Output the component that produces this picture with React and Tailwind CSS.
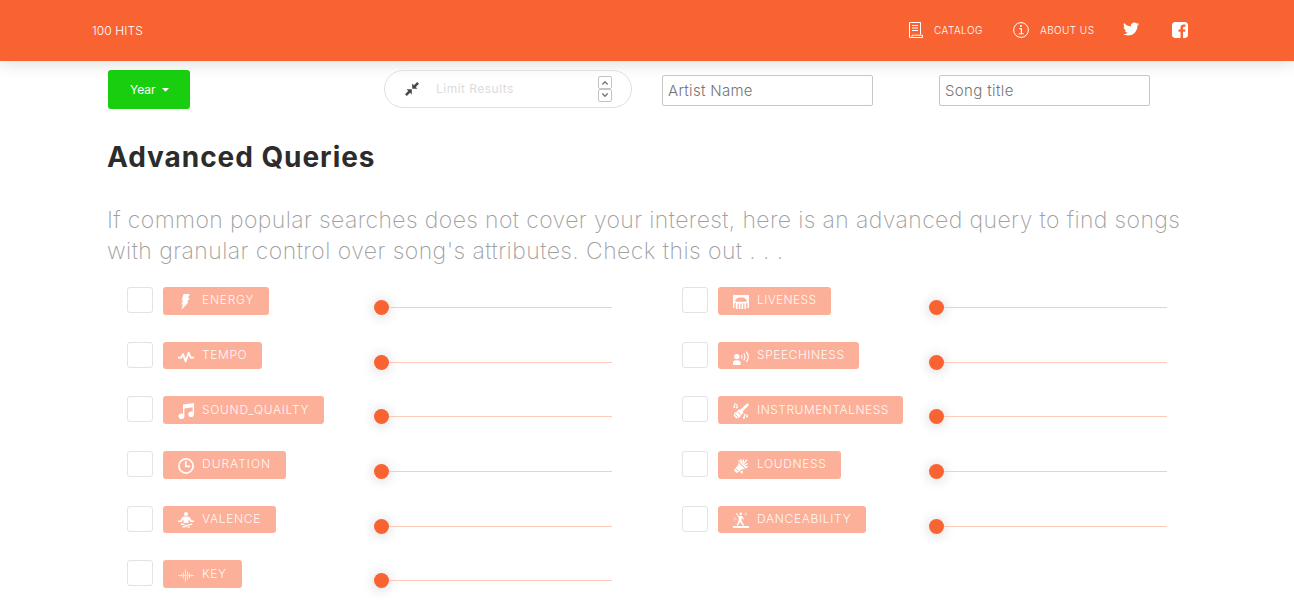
import React from 'react';

const icons = {
  energy: <path d="M5.6 0H12L9.8 4H11.8L9 8.2H10.6L3.2 16L5 10.4H3.2L5.2 6.6H3.6Z" />,
  tempo: (
    <path d="M0 8.7H3.2L5 5L7.6 12.4L10.7 3.8L12.7 8.7H16" fill="none" stroke="currentColor" strokeWidth="1.8" strokeLinejoin="round" />
  ),
  sound: (
    <>
      <path d="M5 1.4L16 0V11.5H14.6V4.3L6.4 5.4V13.5H5Z" />
      <circle cx="3.4" cy="13.2" r="2.8" />
      <circle cx="13.1" cy="11.2" r="2.8" />
    </>
  ),
  duration: (
    <g fill="none" stroke="currentColor" strokeWidth="1.7">
      <circle cx="8" cy="8" r="7.1" />
      <path d="M7.8 3V8.3H12" />
    </g>
  ),
  valence: (
    <>
      <circle cx="8" cy="2" r="2" />
      <path d="M6 4.4H10L12 5.4L13.6 8.4H16V10H12.7L10.7 7.6L10.3 11H5.7L5.3 7.6L3.3 10H0V8.4H2.4L4 5.4Z" />
      <path d="M2 11.4L5 11.6L7.6 12.4L4.2 13.3ZM14 11.2L14.4 12.4L6 15.6L4 15.2L4.2 14.4ZM9.5 14.9L12.2 14.4L11.2 16L9.6 15.9Z" />
    </>
  ),
  key: (
    <path d="M0 8.5H2M14 8.5H16M3.5 7V10M5.5 5.5V11.5M7.5 2.5V14.5M9.5 4.5V12.5M11.5 6V11M13.2 7.6V9.4M2 8.5H14" fill="none" stroke="currentColor" strokeWidth="1.1" opacity=".65" />
  ),
  liveness: (
    <path d="M0 1H16V14H14.6V9.5L13.2 8.6V15H11.4V9.4H10.2V15H8.6V9.4H7.4V15H5.8V9.4H4.6V15H2.8V8.6L1.4 9.5V14H0ZM2 6.6L2.8 7.8H13.2L14 6.6L12.2 4.4L10.5 3.4H5.5L3.8 4.4Z" fillRule="evenodd" />
  ),
  speech: (
    <>
      <circle cx="3.8" cy="7.6" r="2.7" />
      <path d="M0 16V13.6Q0 11.4 2.3 11.2H5.2Q7.6 11.4 7.6 13.6V16Z" />
      <g fill="none" stroke="currentColor" strokeWidth="1.1">
        <path d="M8.4 6Q9.5 7.7 8.4 9.6M10.8 4.3Q13 7.8 10.8 11.3M13.2 2.6Q17.4 7.8 13.2 13" />
      </g>
    </>
  ),
  instrument: (
    <>
      <path d="M14.4 .2L15.9 1.6L15 3L9.7 8.4L10.6 10L8.6 11.6L6.5 14.6L3.5 15.6L.6 12.8L1.3 9.7L3.8 8.8L5.3 6.4L7.2 6.8L12.9 1.6Z" />
      <path d="M1.6 4V.7L4.2 1.8V4.4M11.4 14.5V11.4L14.4 12.4V13.6" fill="none" stroke="currentColor" strokeWidth=".9" />
      <circle cx="1.2" cy="3.9" r="1" /><circle cx="3.7" cy="4.6" r="1" />
      <circle cx="11" cy="14.7" r="1.1" /><circle cx="14" cy="13.6" r="1" />
      <path d="M1.8 10.8L5.4 14.4M4.6 9L7.4 11.8" stroke="#fcb099" strokeWidth="1" />
    </>
  ),
  loudness: (
    <>
      <path d="M5.4 4.4L12 11L9 11.2L5.4 14L3.4 15L1 12.6L2.2 10.4L5 7.2Z" />
      <path d="M5.6 2.4L13.6 10.2" fill="none" stroke="currentColor" strokeWidth="1.3" />
      <path d="M7.6 1L9 4.2M10.6 1.4L9.8 5.4M14 1.6L10.4 6M14.6 5.4L11.2 7.4M14.8 8.8L12.4 8.6" fill="none" stroke="currentColor" strokeWidth="1.2" />
      <path d="M7.2 13.6L9.6 12.4L9.8 15.6L8.2 15.4Z" />
      <path d="M2.6 10.4L5.6 13.4" stroke="#fcb099" strokeWidth=".9" />
    </>
  ),
  dance: (
    <>
      <path d="M0 14H16V16H0Z" />
      <circle cx="7.8" cy="1.9" r="1.4" />
      <path d="M3.4 .8L5.7 4H9L11 6.8L10.3 7.6L8.8 6L8.5 8.5L11.3 13.5H9.8L7.2 10L5 13.5H3.6L5.7 8.6V5.7L2.8 1.4Z" />
      <path d="M11.8 3.6V1.2H13.6V3.6M1.2 8.8V6.4L3 5.9V8" fill="none" stroke="currentColor" strokeWidth=".8" opacity=".55" />
    </>
  ),
};

const leftColumn = [
  { label: 'ENERGY', icon: 'energy', width: 'w-[106px]', tracking: 'tracking-[0.77px]' },
  { label: 'TEMPO', icon: 'tempo', width: 'w-[99px]', tracking: 'tracking-[0.6px]' },
  { label: 'SOUND_QUAILTY', icon: 'sound', width: 'w-[161px]', tracking: 'tracking-[0.7px]' },
  { label: 'DURATION', icon: 'duration', width: 'w-[123px]', tracking: 'tracking-[1px]' },
  { label: 'VALENCE', icon: 'valence', width: 'w-[113px]', tracking: 'tracking-[0.7px]' },
  { label: 'KEY', icon: 'key', width: 'w-[79px]', tracking: 'tracking-[0.6px]' },
];

const rightColumn = [
  { label: 'LIVENESS', icon: 'liveness', width: 'w-[113px]', tracking: 'tracking-[0.36px]' },
  { label: 'SPEECHINESS', icon: 'speech', width: 'w-[141px]', tracking: 'tracking-[0.55px]' },
  { label: 'INSTRUMENTALNESS', icon: 'instrument', width: 'w-[185px]', tracking: 'tracking-[0.5px]' },
  { label: 'LOUDNESS', icon: 'loudness', width: 'w-[123px]', tracking: 'tracking-[0.62px]' },
  { label: 'DANCEABILITY', icon: 'dance', width: 'w-[148px]', tracking: 'tracking-[0.68px]' },
];

function Attribute({ label, icon, width, tracking }) {
  return (
    <div className="flex h-[54.63px] items-start">
      <div className="h-[26px] w-[26px] shrink-0 rounded-[3px] border border-[#e3e3e3] bg-white" />
      <div className="ml-[10px] w-[211px] shrink-0">
        <div className={`flex h-[27.8px] items-center rounded-[3px] bg-[#fcb099] pl-[15px] text-white ${width}`}>
          <svg className="mt-[2px] h-4 w-4 shrink-0" viewBox="0 0 16 16" fill="currentColor">{icons[icon]}</svg>
          <span className={`-mt-px ml-2 whitespace-nowrap text-[12px] font-light leading-[16px] text-white/95 ${tracking}`}>{label}</span>
        </div>
      </div>
      <div className="mt-[13px] flex h-[15px] w-[238px] items-center">
        <div className="h-[15px] w-[15px] shrink-0 rounded-full bg-[#f96332] shadow-[0_1px_13px_0_rgba(0,0,0,0.2)]" />
        <div className="h-px flex-1 bg-[#fbcab9]" />
      </div>
    </div>
  );
}

function Header() {
  return (
    <header className="flex h-[61px] items-center bg-[#f96332] pl-[92px] pr-[106px] text-white shadow-[0_1px_16px_0_rgba(0,0,0,0.16)]">
      <span className="text-[12px] font-light tracking-[0.1px]">100 HITS</span>
      <nav className="ml-auto flex items-center">
        <svg className="-mt-px h-4 w-4" viewBox="0 0 16 16" fill="none" stroke="currentColor">
          <path d="M4 15.5H1.5V.5H12.5V12.5M4 15.5V13.2H14.5V15.5ZM4 3.5H10M4 6H10M4 8.5H10" />
        </svg>
        <span className="ml-[10px] w-[49px] whitespace-nowrap text-[10px] font-light tracking-[0.47px]">CATALOG</span>
        <svg className="-mt-px ml-[30px] h-4 w-4" viewBox="0 0 16 16" fill="none" stroke="currentColor">
          <circle cx="8" cy="8" r="7.4" />
          <path d="M6 6.7H8.4V11.5M5.8 11.8H10.7" strokeWidth="1.1" />
          <rect x="7" y="3" width="1.8" height="1.8" fill="currentColor" stroke="none" />
        </svg>
        <span className="ml-[11px] w-[54px] whitespace-nowrap text-[10px] font-light tracking-[0.42px]">ABOUT US</span>
        <svg className="-mt-[3px] ml-[29px] h-4 w-4" viewBox="0 0 512 512" fill="currentColor">
          <path d="M459.37 151.716c.325 4.548.325 9.097.325 13.645 0 138.72-105.583 298.558-298.558 298.558-59.452 0-114.68-17.219-161.137-47.106 8.447.974 16.568 1.299 25.34 1.299 49.055 0 94.213-16.568 130.274-44.832-46.132-.975-84.792-31.188-98.112-72.772 6.498.974 12.995 1.624 19.818 1.624 9.421 0 18.843-1.3 27.614-3.573-48.081-9.747-84.143-51.98-84.143-102.985v-1.299c13.969 7.797 30.214 12.67 47.431 13.319-28.264-18.843-46.781-51.005-46.781-87.391 0-19.492 5.197-37.36 14.294-52.954 51.655 63.675 129.3 105.258 216.365 109.807-1.624-7.797-2.599-15.918-2.599-24.04 0-57.828 46.782-104.934 104.934-104.934 30.213 0 57.502 12.67 76.67 33.137 23.715-4.548 46.456-13.32 66.599-25.34-7.798 24.366-24.366 44.833-46.132 57.827 21.117-2.273 41.584-8.122 60.426-16.243-14.292 20.791-32.161 39.308-52.628 54.253z" />
        </svg>
        <svg className="-mt-[2px] ml-[33px] h-4 w-4" viewBox="0 128 1536 1536" fill="currentColor">
          <path d="M1248 128q119 0 203.5 84.5t84.5 203.5v960q0 119-84.5 203.5t-203.5 84.5h-188v-595h199l30-232h-229v-148q0-56 23.5-84t91.5-28l122-1v-207q-63-9-178-9-136 0-217.5 80t-81.5 226v171h-200v232h200v595h-532q-119 0-203.5-84.5t-84.5-203.5v-960q0-119 84.5-203.5t203.5-84.5h960z" />
        </svg>
      </nav>
    </header>
  );
}

function Stepper() {
  return (
    <div className="flex h-[26px] w-[14px] flex-col text-[#777]">
      <div className="flex h-[13px] items-center justify-center rounded-[2px] border border-[#c4c4c4]">
        <svg className="h-[6px] w-[8px]" viewBox="0 0 8 6" fill="none" stroke="currentColor" strokeWidth="1.4"><path d="M1.3 4.5L4 1.8L6.7 4.5" /></svg>
      </div>
      <div className="flex h-[13px] items-center justify-center rounded-[2px] border border-[#c4c4c4]">
        <svg className="-mt-[2px] h-[6px] w-[8px]" viewBox="0 0 8 6" fill="none" stroke="currentColor" strokeWidth="1.4"><path d="M1.3 1.5L4 4.2L6.7 1.5" /></svg>
      </div>
    </div>
  );
}

export default function App() {
  return (
    <div className="h-[611px] overflow-hidden bg-white font-['Inter','Liberation_Sans',sans-serif] font-normal">
      <Header />
      <div className="flex items-start pl-[108px] pt-[9px]">
        <button className="relative flex h-[39px] w-[82px] items-center rounded-[3px] bg-[#18ce0f] pl-[22px] text-[12px] text-white">
          Year
          <svg className="ml-[6px] h-[4px] w-[7px]" viewBox="0 0 7 4" fill="currentColor"><path d="M0 0H7L3.5 3.7Z" /></svg>
        </button>
        <div className="ml-[194px] flex h-[38px] w-[248px] items-center rounded-full border border-[#e0e0e0] pl-[20px] pr-[19px]">
          <svg className="h-[14px] w-[14px] text-[#4a4a4a]" viewBox="0 0 14 14" fill="currentColor">
            <path d="M7.2 1.6L9 3.2L12.2 0L14 1.8L10.8 5L12.4 6.8H7.2ZM6.8 12.4L5 10.8L1.8 14L0 12.2L3.2 9L1.6 7.2H6.8Z" />
          </svg>
          <input className="ml-[17px] w-[120px] bg-transparent text-[12px] tracking-[0.48px] outline-none placeholder:text-[#dcdcdc]" placeholder="Limit Results" />
          <div className="ml-auto"><Stepper /></div>
        </div>
        <input className="ml-[30px] mt-[5px] h-[31px] w-[211px] rounded-[2px] border border-[#c6c6c6] px-[5px] text-[15px] font-light tracking-[0.3px] outline-none placeholder:text-[#757575]" placeholder="Artist Name" />
        <input className="ml-[66px] mt-[5px] h-[31px] w-[211px] rounded-[2px] border border-[#c6c6c6] px-[5px] text-[15px] font-light tracking-[0.36px] outline-none placeholder:text-[#757575]" placeholder="Song title" />
      </div>
      <h2 className="mt-[27px] pl-[107px] text-[28px] font-bold leading-[42px] tracking-[0.95px] text-[#2c2c2c]">Advanced Queries</h2>
      <p className="mt-[27px] whitespace-nowrap pl-[107px] text-[23px] font-extralight leading-[31px] text-[#a0a0a0]">
        <span className="tracking-[0.38px]">If common popular searches does not cover your interest, here is an advanced query to find songs</span>
        <br />
        <span className="tracking-[0.44px]">with granular control over song's attributes. Check this out . . .</span>
      </p>
      <div className="mt-[20px] flex pl-[127px]">
        <div className="w-[555px]">{leftColumn.map((a) => <Attribute key={a.label} {...a} />)}</div>
        <div>{rightColumn.map((a) => <Attribute key={a.label} {...a} />)}</div>
      </div>
    </div>
  );
}
